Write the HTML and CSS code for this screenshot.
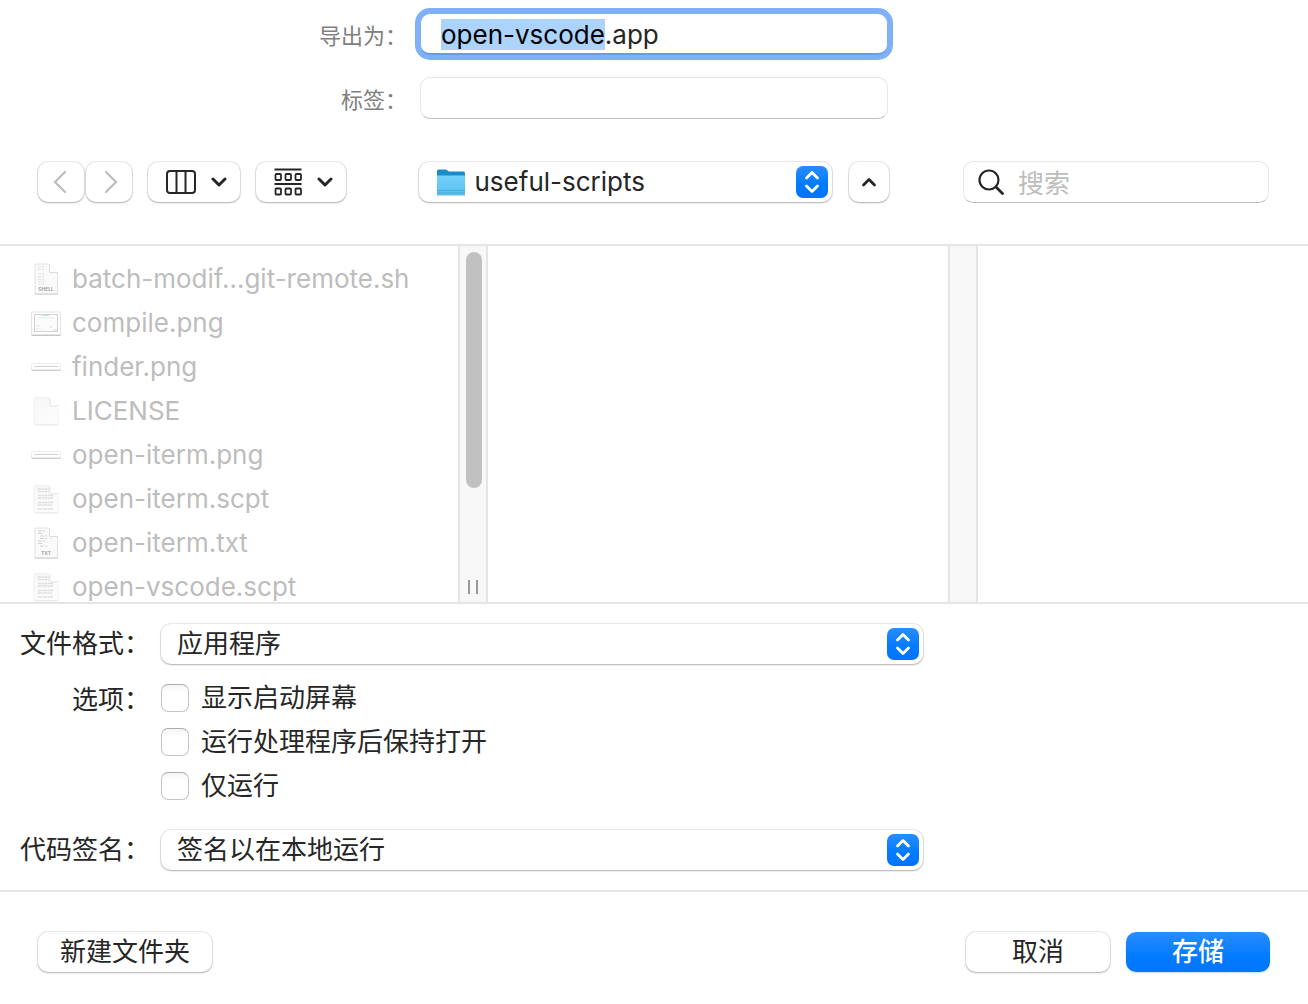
FILE: index.html
```html
<!DOCTYPE html>
<html lang="zh-CN">
<head>
<meta charset="utf-8">
<meta name="viewport" content="width=device-width, initial-scale=1">
<title>导出为</title>
<link rel="stylesheet" href="styles.css">
</head>
<body>
<svg class="sprite" aria-hidden="true">
  <defs>
    <linearGradient id="chip-fill" x1="0" y1="0" x2="0" y2="1">
      <stop offset="0" stop-color="#2a8cff"/><stop offset=".6" stop-color="#007aff"/><stop offset="1" stop-color="#0274fb"/>
    </linearGradient>
    <linearGradient id="folder-fill" x1="0" y1="0" x2="0" y2="1">
      <stop offset="0" stop-color="#74d1fa"/><stop offset="1" stop-color="#58bfee"/>
    </linearGradient>
    <linearGradient id="page-fill" x1="0" y1="0" x2="1" y2="1">
      <stop offset="0" stop-color="#f7f7f7"/><stop offset="1" stop-color="#fdfdfd"/>
    </linearGradient>
    <symbol id="chip" viewBox="0 0 32 32">
      <rect width="32" height="32" rx="7" fill="url(#chip-fill)"/>
      <path d="M10.500 12 16 6.500l5.500 5.500M10.500 20 16 25.500l5.500-5.500" fill="none" stroke="#fff" stroke-width="2.800" stroke-linecap="round" stroke-linejoin="round"/>
    </symbol>
    <symbol id="down" viewBox="0 0 16 10">
      <path d="M2 2l6 6 6-6" fill="none" stroke="#262626" stroke-width="3" stroke-linecap="round" stroke-linejoin="round"/>
    </symbol>
    <symbol id="page" viewBox="0 0 32 32">
      <path d="M5 2.500h14l9 9v17a1 1 0 0 1-1 1H5a1 1 0 0 1-1-1v-25a1 1 0 0 1 1-1z" fill="url(#page-fill)" stroke="#f1f1f1"/>
      <path d="M4.500 30h23" stroke="#e8e8e8"/>
      <path d="M19.500 2.500v8.500H28z" fill="#fff"/>
      <path d="M20 3v8h8" fill="none" stroke="#e2e2e2"/>
    </symbol>
    <symbol id="shadowed-page" viewBox="0 0 32 32">
      <path d="M4.500 31h23.500" stroke="#d0d0d0" stroke-width="1.500"/>
      <path d="M5 1h14l8.500 8.500v21H5z" fill="#fafafa" stroke="#e2e2e2"/>
      <path d="M19 1v8.500h8.500z" fill="#fff"/>
      <path d="M19.500 1v8.500h8" fill="none" stroke="#ddd"/>
    </symbol>
    <symbol id="script" viewBox="0 0 32 32">
      <use href="#page"/>
      <path d="M8 6h11M8 8.500h11M8 12.500h15M8 15h15M8 19.500h15M8 22h14M8 26h15" stroke="#dedede" stroke-width="1.500" stroke-dasharray="3 .6 2 .5"/>
    </symbol>
    <symbol id="banner" viewBox="0 0 32 32">
      <rect x="1.500" y="14" width="29" height="6" rx="1" fill="#cfcfcf"/>
      <rect x="1.500" y="12.500" width="29" height="6" rx="1" fill="#fff" stroke="#ececec"/>
      <path d="M4 15.500h24" stroke="#d2d2d2"/>
    </symbol>
  </defs>
</svg>

<form class="dialog">
  <section class="naming">
    <label class="naming-label" for="name">导出为：</label>
    <input class="field field-focus" id="name" type="text" value="open-vscode.app" autocomplete="off" spellcheck="false">
    <label class="naming-label" for="tags">标签：</label>
    <input class="field" id="tags" type="text" autocomplete="off">
  </section>

  <nav class="toolbar">
    <div class="views">
      <div class="history">
        <button class="button nav-button nav-back" type="button" aria-label="后退"><svg width="14" height="24" viewBox="0 0 14 24"><path d="M12 2 2 12l10 10" fill="none" stroke="#bdbdbd" stroke-width="2.200" stroke-linecap="round"/></svg></button>
        <button class="button nav-button nav-forward" type="button" aria-label="前进"><svg width="14" height="24" viewBox="0 0 14 24"><path d="M2 2l10 10L2 22" fill="none" stroke="#bdbdbd" stroke-width="2.200" stroke-linecap="round"/></svg></button>
      </div>
      <button class="button view-button" type="button" aria-label="分栏显示">
        <svg width="30" height="24" viewBox="0 0 30 24" fill="none" stroke="#262626" stroke-width="2"><rect x="1" y="1" width="28" height="22" rx="3"/><path d="M10.500 1v22M19.500 1v22"/></svg>
        <svg width="16" height="10"><use href="#down"/></svg>
      </button>
      <button class="button group-button" type="button" aria-label="分组方式">
        <svg width="28" height="28" viewBox="0 0 28 28" fill="none" stroke="#262626" stroke-width="1.800"><path d="M.5 1.500h27M.5 16h27"/><rect x="1.500" y="6" width="5.500" height="6" rx="1"/><rect x="11.500" y="6" width="5.500" height="6" rx="1"/><rect x="21.500" y="6" width="5.500" height="6" rx="1"/><rect x="1.500" y="20.500" width="5.500" height="6" rx="1"/><rect x="11.500" y="20.500" width="5.500" height="6" rx="1"/><rect x="21.500" y="20.500" width="5.500" height="6" rx="1"/></svg>
        <svg width="16" height="10"><use href="#down"/></svg>
      </button>
    </div>
    <div class="location">
      <div class="popup popup-folder">
        <select class="popup-select" aria-label="位置"><option>useful-scripts</option></select>
        <svg class="popup-folder-icon" width="32" height="32" viewBox="0 0 32 32">
          <path d="M2 28h28v2H2z" fill="#c8d3d8"/>
          <path d="M2 5a1.500 1.500 0 0 1 1.500-1.500h7q1 0 2 1L14 5.500h14.500A1.500 1.500 0 0 1 30 7v6H2z" fill="#1c8cc9"/>
          <path d="M2 9.500h28V28a1 1 0 0 1-1 1H3a1 1 0 0 1-1-1z" fill="url(#folder-fill)"/>
          <path d="M2 24.500h28M2 27h28" stroke="#42a8d8" stroke-width=".8"/>
        </svg>
        <svg class="popup-chip" width="32" height="32"><use href="#chip"/></svg>
      </div>
      <button class="button collapse-button" type="button" aria-label="收起"><svg width="16" height="10" viewBox="0 0 16 10"><path d="M2.500 8 8 2.500 13.500 8" fill="none" stroke="#262626" stroke-width="2.800" stroke-linecap="round" stroke-linejoin="round"/></svg></button>
    </div>
    <div class="search">
      <svg class="search-icon" width="26" height="26" viewBox="0 0 26 26" fill="none" stroke="#262626" stroke-width="2.200" stroke-linecap="round"><circle cx="11" cy="11" r="9.500"/><path d="M18 18l6.500 6.500" stroke-width="2.800"/></svg>
      <input class="field search-field" type="search" placeholder="搜索" aria-label="搜索">
    </div>
  </nav>

  <section class="browser">
    <div class="column">
      <ul class="files">
        <li class="file"><svg width="32" height="32" viewBox="0 0 32 32"><use href="#shadowed-page"/><path d="M8 4h7M8 6.500h9M8 11h9M8 13.500h7M8 16h9M8 18.500h6M8 21h8" stroke="#e2e2e2" stroke-dasharray="3 1 2"/><text class="badge" x="16" y="28" text-anchor="middle">SHELL</text></svg>batch-modif…git-remote.sh</li>
        <li class="file"><svg width="32" height="32" viewBox="0 0 32 32"><path d="M1.500 28h29" stroke="#c6c6c6" stroke-width="2"/><rect x="1.500" y="5" width="29" height="22.500" fill="#fff" stroke="#e4e4e4"/><rect x="4.500" y="7.500" width="23" height="17" fill="#fcfcfc" stroke="#d2d2d2"/><path d="M12 8.500h7M20 20h2M23 23h4" stroke="#c8ddf5"/><path d="M7 11h18M6 19h4M6 22h5" stroke="#e8ebee"/></svg>compile.png</li>
        <li class="file"><svg width="32" height="32"><use href="#banner"/></svg>finder.png</li>
        <li class="file"><svg width="32" height="32"><use href="#page"/></svg>LICENSE</li>
        <li class="file"><svg width="32" height="32"><use href="#banner"/></svg>open-iterm.png</li>
        <li class="file"><svg width="32" height="32"><use href="#script"/></svg>open-iterm.scpt</li>
        <li class="file"><svg width="32" height="32" viewBox="0 0 32 32"><use href="#shadowed-page"/><path d="M8 4h7M8 6.500h4M10 9h8M10 11.500h13M8 14h8M8 16.500h5M10 19h7" stroke="#d2d2d2" stroke-dasharray="4 1 2"/><text class="badge" x="16" y="28" text-anchor="middle">TXT</text></svg>open-iterm.txt</li>
        <li class="file"><svg width="32" height="32"><use href="#script"/></svg>open-vscode.scpt</li>
      </ul>
      <div class="track"><div class="thumb"></div><div class="grip"></div></div>
    </div>
    <div class="column"><div class="track"></div></div>
    <div class="column-rest"></div>
  </section>

  <section class="options">
    <label class="options-label" for="format">文件格式：</label>
    <div class="popup">
      <select class="popup-select" id="format"><option>应用程序</option></select>
      <svg class="popup-chip" width="32" height="32"><use href="#chip"/></svg>
    </div>
    <span class="options-label options-label-checks" id="checks-label">选项：</span>
    <div class="checks" role="group" aria-labelledby="checks-label">
      <label class="check"><input class="check-box" type="checkbox">显示启动屏幕</label>
      <label class="check"><input class="check-box" type="checkbox">运行处理程序后保持打开</label>
      <label class="check"><input class="check-box" type="checkbox">仅运行</label>
    </div>
    <label class="options-label" for="signing">代码签名：</label>
    <div class="popup">
      <select class="popup-select" id="signing"><option>签名以在本地运行</option></select>
      <svg class="popup-chip" width="32" height="32"><use href="#chip"/></svg>
    </div>
  </section>

  <footer class="actions">
    <button class="button new-folder" type="button">新建文件夹</button>
    <button class="button action" type="button">取消</button>
    <button class="button action action-primary" type="submit">存储</button>
  </footer>
</form>
<script src="script.js"></script>
</body>
</html>
```
FILE: script.js
```js
// Select the file name without its extension, ready for typing.
const nameField = document.getElementById("name");
nameField.focus();
nameField.setSelectionRange(0, nameField.value.lastIndexOf("."));
```
FILE: styles.css
```css
* {
  box-sizing: border-box;
}

body {
  margin: 0;
  background: #fff;
  color: #262626;
  font: 26px/32px Inter, "Noto Sans CJK SC", sans-serif;
}

button,
input,
select {
  margin: 0;
  color: inherit;
  font: inherit;
}

svg {
  display: block;
  flex: none;
}

.sprite {
  position: absolute;
  width: 0;
  height: 0;
}

.dialog {
  display: flex;
  flex-direction: column;
  height: 100vh;
  min-height: 800px;
}

/* Shared controls */
.field {
  width: 100%;
  height: 42px;
  padding: 2px 20px 0;
  border: 1px solid #e6e6e6;
  border-bottom-color: #bdbdbd;
  border-radius: 10px;
  background: #fff;
  outline: none;
}

.field-focus {
  border-color: #80b1f6;
  border-bottom: 2px solid #669de4;
  box-shadow: 0 0 0 5px #80b1f6;
}

.field::selection {
  background: #abd3fb;
  color: #000;
}

.button {
  display: flex;
  align-items: center;
  justify-content: center;
  height: 40px;
  padding: 0;
  border: 0;
  border-radius: 10px;
  background: #fff;
  box-shadow: 0 0 0 1px #00000014, 0 1px 2px #00000040;
}

.popup {
  position: relative;
  height: 40px;
}

.popup-select {
  appearance: none;
  display: block;
  width: 100%;
  height: 40px;
  padding: 0 48px 0 16px;
  border: 0;
  border-radius: 10px;
  background: #fff;
  box-shadow: 0 0 0 1px #00000014, 0 1px 2px #00000040;
  outline: none;
}

.popup-chip {
  position: absolute;
  top: 4px;
  right: 4px;
  pointer-events: none;
}

/* File name and tags */
.naming {
  display: grid;
  grid-template-columns: 1fr 468px 1fr;
  row-gap: 22px;
  align-items: center;
  padding-top: 13px;
}

.naming > .field {
  grid-column: 2;
}

.naming-label {
  grid-column: 1;
  padding: 4px 13px 0 0;
  color: #808080;
  font-size: 22px;
  text-align: right;
}

/* Toolbar */
.toolbar {
  display: flex;
  align-items: center;
  justify-content: space-between;
  padding: 42px 39px 41px 38px;
  border-bottom: 2px solid #e5e5e5;
}

.views {
  display: flex;
  gap: 16px;
}

.history {
  display: flex;
  gap: 2px;
}

.nav-button {
  width: 46px;
}

.nav-back {
  padding-right: 3px;
}

.nav-forward {
  padding-left: 3px;
}

.view-button,
.group-button {
  gap: 15px;
  padding-left: 5px;
}

.view-button {
  width: 92px;
}

.group-button {
  width: 90px;
}

.location {
  display: flex;
  gap: 17px;
}

.popup-folder {
  width: 413px;
}

.popup-folder .popup-select {
  padding-left: 56px;
}

.popup-folder-icon {
  position: absolute;
  top: 4px;
  left: 16px;
  pointer-events: none;
}

.collapse-button {
  width: 40px;
}

.search {
  position: relative;
  width: 306px;
  margin-left: 2px;
}

.search-icon {
  position: absolute;
  top: 8px;
  left: 15px;
}

.search-field {
  display: block;
  padding-left: 54px;
}

.search-field::placeholder {
  color: #bdbdbd;
}

/* Column browser */
.browser {
  display: grid;
  flex: 1 1 0;
  grid-template-columns: 488px 490px 1fr;
  grid-template-rows: minmax(0, 1fr);
  min-height: 0;
  overflow: hidden;
  border-bottom: 2px solid #e5e5e5;
}

.column {
  display: flex;
  justify-content: flex-end;
  min-height: 0;
}

.files {
  flex: 1;
  margin: 0;
  padding: 11px 0 0 30px;
  overflow: hidden;
  color: #bdbdbd;
  list-style: none;
}

.file {
  display: flex;
  align-items: center;
  gap: 10px;
  height: 44px;
  white-space: nowrap;
}

.badge {
  fill: #999;
  font-size: 5px;
  font-weight: 600;
}

.track {
  display: flex;
  flex-direction: column;
  justify-content: space-between;
  width: 30px;
  padding: 6px 4px 8px 6px;
  border: solid #e5e5e5;
  border-width: 0 2px;
  background: #f8f8f8;
}

.thumb {
  width: 16px;
  height: 69%;
  border-radius: 8px;
  background: #c1c1c1;
}

.grip {
  width: 10px;
  height: 14px;
  margin-left: 2px;
  border: solid #999;
  border-width: 0 2px;
}

/* Export options */
.options {
  display: grid;
  grid-template-columns: 150px minmax(0, 762px);
  column-gap: 11px;
  padding: 20px 0;
  border-bottom: 2px solid #e5e5e5;
}

.options-label {
  padding-top: 4px;
  text-align: right;
}

.options-label-checks {
  padding-top: 20px;
}

.checks {
  display: grid;
  gap: 12px;
  padding: 18px 0 28px;
}

.check {
  display: flex;
  align-items: center;
  gap: 12px;
}

.check-box {
  appearance: none;
  width: 28px;
  height: 28px;
  border: 1px solid #c4c4c4;
  border-top-color: #adadad;
  border-radius: 7px;
  background: linear-gradient(#f5f5f5, #fff 30%);
}

/* Buttons */
.actions {
  display: flex;
  gap: 16px;
  padding: 40px 38px 32px;
}

.new-folder {
  width: 174px;
  margin-right: auto;
}

.action {
  width: 144px;
}

.action-primary {
  background: linear-gradient(#2a8cff, #007aff 65%, #0276fc);
  box-shadow: 0 1px 2px #007aff40;
  color: #fff;
  font-weight: 500;
}
```
